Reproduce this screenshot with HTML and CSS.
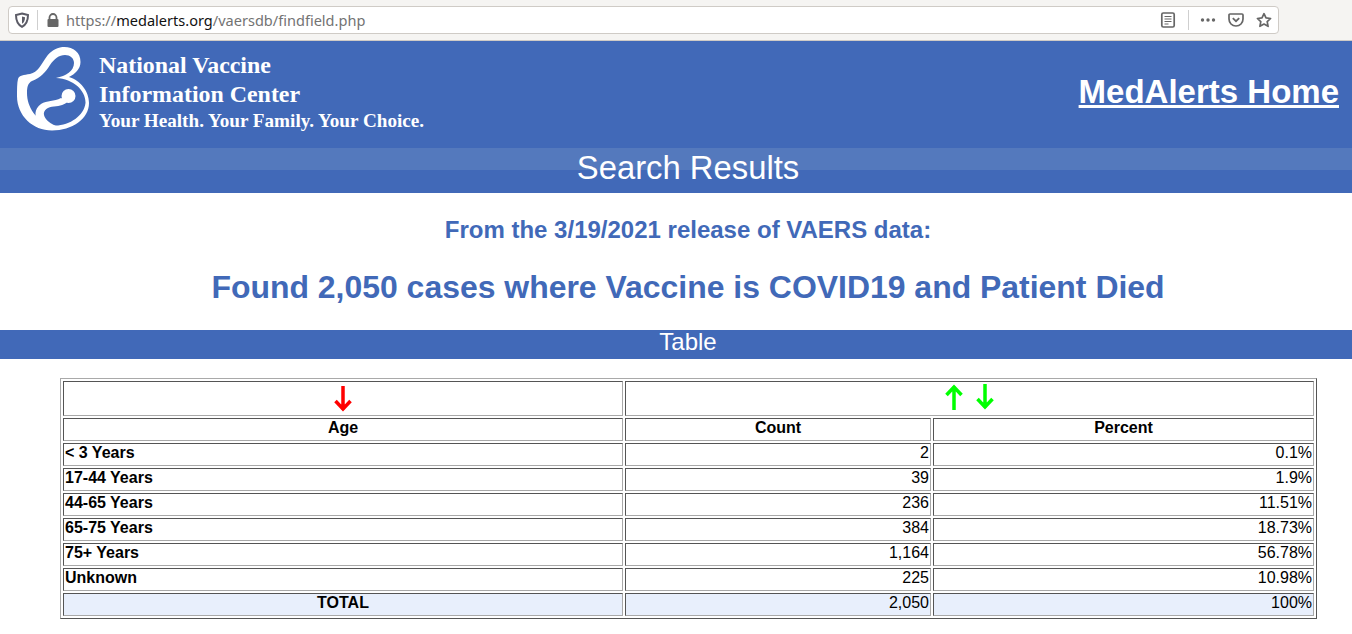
FILE: index.html
```html
<!DOCTYPE html>
<html lang="en">
<head>
  <meta charset="UTF-8" />
  <title>Search Results</title>
  <link rel="stylesheet" href="styles.css">
</head>
<body>

  <!-- browser toolbar -->
  <div class="toolbar">
    <div class="urlbar">
      <svg class="icon shield" width="16" height="16" viewBox="0 0 16 16"><path d="M8 1.500 L14 3 C14 9 12.500 12.500 8 14.800 C3.500 12.500 2 9 2 3 Z" fill="none" stroke="#5b5b66" stroke-width="2"/><path d="M8 4.500 L11 5.300 C11 8.500 10 10.500 8 11.800 Z" fill="#5b5b66"/></svg>
      <span class="divider"></span>
      <svg class="icon lock" width="14" height="14" viewBox="0 0 14 14"><path d="M3.500 6 V4.500 a3.500 3.500 0 0 1 7 0 V6" fill="none" stroke="#666" stroke-width="1.800"/><rect x="1.500" y="6" width="11" height="8" rx="1" fill="#666"/></svg>
      <div class="url">https://<b>medalerts.org</b>/vaersdb/findfield.php</div>
      <svg class="icon" width="16" height="16" viewBox="0 0 16 16"><rect x="1.800" y="1" width="12.400" height="14" rx="1.500" fill="none" stroke="#666" stroke-width="1.700"/><path d="M4.500 4.500 H11.500 M4.500 7 H11.500 M4.500 9.500 H11.500 M4.500 12 H8.500" stroke="#666" stroke-width="1"/></svg>
      <span class="divider divider-right"></span>
      <svg class="icon dots" width="16" height="16" viewBox="0 0 16 16"><circle cx="2.500" cy="8" r="1.700" fill="#666"/><circle cx="8" cy="8" r="1.700" fill="#666"/><circle cx="13.500" cy="8" r="1.700" fill="#666"/></svg>
      <svg class="icon pocket" width="16" height="16" viewBox="0 0 16 16"><path d="M2 2 H14 a1 1 0 0 1 1 1 V7 C15 11 12 14 8 14 C4 14 1 11 1 7 V3 a1 1 0 0 1 1 -1 Z" fill="none" stroke="#666" stroke-width="1.700"/><path d="M4.800 6.200 L8 9.200 L11.200 6.200" fill="none" stroke="#666" stroke-width="1.800"/></svg>
      <svg class="icon star" width="16" height="16" viewBox="0 0 16 16"><path d="M8 1.700 L10 5.900 L14.600 6.500 L11.200 9.700 L12.100 14.300 L8 12 L3.900 14.300 L4.800 9.700 L1.400 6.500 L6 5.900 Z" fill="none" stroke="#666" stroke-width="1.700" stroke-linejoin="round"/></svg>
    </div>
  </div>

  <!-- site header -->
  <div class="banner">
    <div class="brand">
      <svg class="logo" width="74" height="86" viewBox="16 45 74 86">
        <path fill="#fff" fill-rule="evenodd" d="M60 46.500 C71 44.500 80.500 50 80.500 61 C80.500 68 75 73 69 76 C80 79 89 90 89 102 C89 118 72 129.500 52 129.500 C33 129.500 17 115 17 95 C17 88 17 82 18 78 C19 74 24 74 30 73 C38 71 41 64 45 58 C48 53 53 48 60 46.500 Z M65 54 C59 54 54 58 50 64 C46 71 40 77 32 80 C28 82 27 86 27 92 C27 106 36 119 50 124 C66 127 84 116 85.500 102 C86 90 74 78 56 77 C66 75 74 70 74 62 C74 57 70 54 65 54 Z"/>
        <circle cx="68.500" cy="95" r="7" fill="#fff"/>
        <path fill="#fff" d="M61 97 C54 101 47 99 41 103 C34 108 34 116 39 121 C43 125 50 127 58 126 C51 123 45 119 44 114 C43 109 48 106 54 105.500 C60 105 65 104 68 100 Z"/>
      </svg>
      <div class="brand-text">
        <div class="brand-name">National Vaccine<br>Information Center</div>
        <div class="brand-tag">Your Health. Your Family. Your Choice.</div>
      </div>
    </div>
    <a class="home-link" href="#">MedAlerts Home</a>
  </div>
  <div class="page-title">Search Results</div>

  <h2 class="release">From the 3/19/2021 release of VAERS data:</h2>
  <h1 class="found">Found 2,050 cases where Vaccine is COVID19 and Patient Died</h1>

  <div class="section-bar">Table</div>

  <table class="results">
    <colgroup>
      <col class="col-age"><col class="col-count"><col class="col-percent">
    </colgroup>
    <tr class="sort-row">
      <td class="center">
        <svg class="arrow arrow-red" width="18" height="26" viewBox="0 0 18 26"><path d="M9 0 V24 M1.500 15 L9 23 L16.500 15" fill="none" stroke="#f00" stroke-width="3.500"/></svg>
      </td>
      <td class="center" colspan="2">
        <svg class="arrow" width="18" height="26" viewBox="0 0 18 26"><path d="M9 26 V2 M1.500 11 L9 3 L16.500 11" fill="none" stroke="#0f0" stroke-width="3.500"/></svg>
        <svg class="arrow arrow-down" width="18" height="26" viewBox="0 0 18 26"><path d="M9 0 V24 M1.500 15 L9 23 L16.500 15" fill="none" stroke="#0f0" stroke-width="3.500"/></svg>
      </td>
    </tr>
    <tr><th>Age</th><th>Count</th><th>Percent</th></tr>
    <tr><th class="left">&lt; 3 Years</th><td>2</td><td>0.1%</td></tr>
    <tr><th class="left">17-44 Years</th><td>39</td><td>1.9%</td></tr>
    <tr><th class="left">44-65 Years</th><td>236</td><td>11.51%</td></tr>
    <tr><th class="left">65-75 Years</th><td>384</td><td>18.73%</td></tr>
    <tr><th class="left">75+ Years</th><td>1,164</td><td>56.78%</td></tr>
    <tr><th class="left">Unknown</th><td>225</td><td>10.98%</td></tr>
    <tr class="total"><th>TOTAL</th><td>2,050</td><td>100%</td></tr>
  </table>

</body>
</html>
```

FILE: styles.css
```css
body {
  margin: 0;
  background: #fff;
  font-family: "Liberation Sans", Arial, sans-serif;
  color: #000;
}

.toolbar {
  height: 41px;
  padding: 6px 73px 0 8px;
  box-sizing: border-box;
  background: #f5f4f2;
  border-bottom: 1px solid #cfcbc6;
}

.urlbar {
  height: 28px;
  box-sizing: border-box;
  background: #fff;
  border: 1px solid #cfcbc6;
  border-radius: 4px;
  display: flex;
  align-items: center;
  padding: 0 6px 0 5px;
}

.icon {
  flex: none;
}

.divider {
  width: 1px;
  height: 20px;
  background: #cfcfcf;
  margin: 0 8px 0 7px;
}

.divider-right {
  margin: 0 11px 0 12px;
}

.lock {
  margin-right: 6px;
}

.url {
  flex: 1;
  font-family: "Noto Sans", sans-serif;
  font-size: 14.55px;
  color: #737373;
  white-space: nowrap;
}

.url b {
  font-weight: normal;
  color: #111;
}

.pocket, .star {
  margin-left: 12px;
}

.banner {
  height: 107px;
  box-sizing: border-box;
  background: #4169b8;
  display: flex;
  justify-content: space-between;
  padding: 5px 13px 0 16px;
}

.brand {
  display: flex;
}

.logo {
  display: block;
  margin-right: 9px;
}

.brand-text {
  font-family: "Liberation Serif", "Times New Roman", serif;
  font-weight: bold;
  color: #fff;
  padding-top: 5px;
}

.brand-name {
  font-size: 23.9px;
  line-height: 29px;
}

.brand-tag {
  font-size: 19.15px;
  line-height: 24px;
}

.home-link {
  font-size: 33px;
  font-weight: bold;
  color: #fff;
  line-height: 38px;
  margin-top: 27px;
}

.page-title {
  height: 45px;
  line-height: 40px;
  padding-left: 24px;
  text-align: center;
  font-size: 32.8px;
  color: #fff;
  background: linear-gradient(#5479bd 22px, #4169b8 22px);
}

.release, .found {
  margin: 0;
  padding-left: 24px;
  text-align: center;
  font-weight: bold;
  color: #4169b8;
}

.release {
  font-size: 24px;
  line-height: 28px;
  padding-top: 23px;
}

.found {
  font-size: 31.95px;
  line-height: 37px;
  padding-top: 25px;
  padding-bottom: 24px;
}

.section-bar {
  height: 29px;
  line-height: 24px;
  padding-left: 24px;
  text-align: center;
  font-size: 24px;
  color: #fff;
  background: #4169b8;
}

.results {
  width: 1257px;
  margin: 19px 0 0 60px;
  border-collapse: separate;
  border-spacing: 2px;
  border: 1px solid;
  border-color: #a9a9a9 #555 #555 #a9a9a9;
  table-layout: fixed;
  font-size: 16px;
}

.col-age {
  width: 560px;
}

.col-count {
  width: 306px;
}

.results td, .results th {
  padding: 1px 1px 5px;
  line-height: 15px;
  height: 15px;
  border: 1px solid;
  border-color: #555 #a9a9a9 #a9a9a9 #555;
  text-align: right;
  vertical-align: top;
}

.results th {
  text-align: center;
}

.results th.left {
  text-align: left;
}

.results .center {
  text-align: center;
}

.results .sort-row td {
  padding: 1px;
  height: 31px;
  line-height: 0;
}

.arrow {
  display: inline-block;
  vertical-align: top;
  margin-top: 1px;
}

.arrow-red {
  margin-top: 3px;
}

.arrow-down {
  margin-left: 8px;
}

.total td, .total th {
  background: #e8effc;
}
```
